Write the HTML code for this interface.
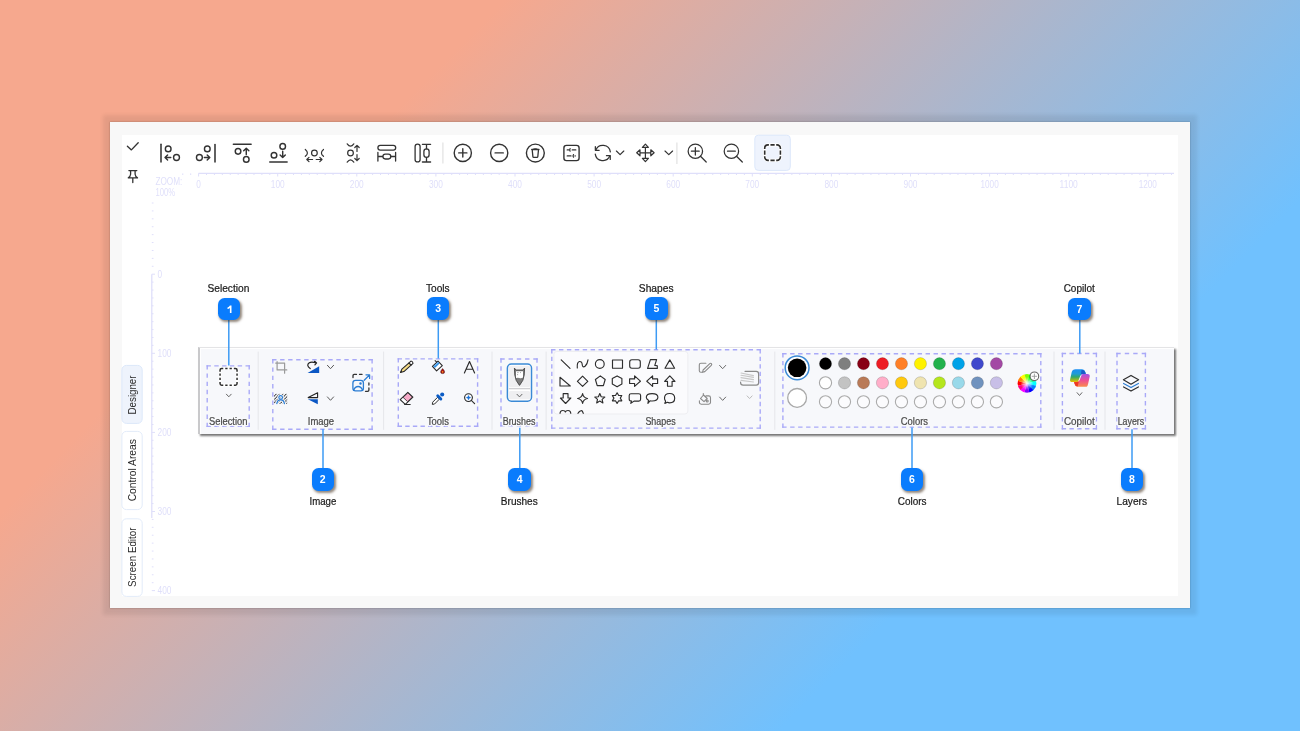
<!DOCTYPE html>
<html><head><meta charset="utf-8">
<style>
html,body{margin:0;padding:0;width:1300px;height:731px;overflow:hidden;}
body{position:relative;font-family:"Liberation Sans",sans-serif;
background:linear-gradient(134.5deg,#f6a88e 0%,#f6a88e 25%,#70c1fe 74.2%,#70c1fe 100%);}
.frame{position:absolute;left:110px;top:122px;width:1080px;height:486px;background:#f8f8f8;
box-shadow:0 0 1.5px rgba(0,0,0,.32),0 0 4px 7px rgba(0,0,0,.075);}
.inner{position:absolute;left:121.5px;top:134.6px;width:1056.8px;height:461.6px;background:#fff;}
.panel{position:absolute;left:198px;top:346.6px;width:976px;height:87.4px;background:#f7f8fb;
border-top:1.2px solid #e4e4e6;border-left:2px solid #c9c9cb;box-sizing:border-box;
box-shadow:inset 1px 1px 0 #fff,2px 2px 2px rgba(0,0,0,.55);}
svg{position:absolute;left:0;top:0;will-change:transform;}
svg text{font-family:"Liberation Sans",sans-serif;}
.badge{position:absolute;width:22.4px;height:22.5px;border-radius:6.5px;background:#0a7cfd;color:#fff;
font:bold 10.5px/22.5px "Liberation Sans",sans-serif;text-align:center;
box-shadow:1.5px 2px 2.5px rgba(60,40,20,.55);}
</style></head><body>
<div class="frame"></div>
<div class="inner"></div>
<div class="panel"></div>
<svg width="1300" height="731" viewBox="0 0 1300 731">
<line x1="198.5" y1="173.4" x2="1174" y2="173.4" stroke="#dfdffa" stroke-width="1.3"/>
<line x1="182.78" y1="173.4" x2="182.78" y2="175" stroke="#dfdffa" stroke-width="1"/>
<line x1="190.69" y1="173.4" x2="190.69" y2="175" stroke="#dfdffa" stroke-width="1"/>
<line x1="198.60" y1="173.4" x2="198.60" y2="176.5" stroke="#dfdffa" stroke-width="1"/>
<line x1="206.51" y1="173.4" x2="206.51" y2="175" stroke="#dfdffa" stroke-width="1"/>
<line x1="214.42" y1="173.4" x2="214.42" y2="175" stroke="#dfdffa" stroke-width="1"/>
<line x1="222.33" y1="173.4" x2="222.33" y2="175" stroke="#dfdffa" stroke-width="1"/>
<line x1="230.24" y1="173.4" x2="230.24" y2="175" stroke="#dfdffa" stroke-width="1"/>
<line x1="238.15" y1="173.4" x2="238.15" y2="175" stroke="#dfdffa" stroke-width="1"/>
<line x1="246.06" y1="173.4" x2="246.06" y2="175" stroke="#dfdffa" stroke-width="1"/>
<line x1="253.97" y1="173.4" x2="253.97" y2="175" stroke="#dfdffa" stroke-width="1"/>
<line x1="261.88" y1="173.4" x2="261.88" y2="175" stroke="#dfdffa" stroke-width="1"/>
<line x1="269.79" y1="173.4" x2="269.79" y2="175" stroke="#dfdffa" stroke-width="1"/>
<line x1="277.70" y1="173.4" x2="277.70" y2="176.5" stroke="#dfdffa" stroke-width="1"/>
<line x1="285.61" y1="173.4" x2="285.61" y2="175" stroke="#dfdffa" stroke-width="1"/>
<line x1="293.52" y1="173.4" x2="293.52" y2="175" stroke="#dfdffa" stroke-width="1"/>
<line x1="301.43" y1="173.4" x2="301.43" y2="175" stroke="#dfdffa" stroke-width="1"/>
<line x1="309.34" y1="173.4" x2="309.34" y2="175" stroke="#dfdffa" stroke-width="1"/>
<line x1="317.25" y1="173.4" x2="317.25" y2="175" stroke="#dfdffa" stroke-width="1"/>
<line x1="325.16" y1="173.4" x2="325.16" y2="175" stroke="#dfdffa" stroke-width="1"/>
<line x1="333.07" y1="173.4" x2="333.07" y2="175" stroke="#dfdffa" stroke-width="1"/>
<line x1="340.98" y1="173.4" x2="340.98" y2="175" stroke="#dfdffa" stroke-width="1"/>
<line x1="348.89" y1="173.4" x2="348.89" y2="175" stroke="#dfdffa" stroke-width="1"/>
<line x1="356.80" y1="173.4" x2="356.80" y2="176.5" stroke="#dfdffa" stroke-width="1"/>
<line x1="364.71" y1="173.4" x2="364.71" y2="175" stroke="#dfdffa" stroke-width="1"/>
<line x1="372.62" y1="173.4" x2="372.62" y2="175" stroke="#dfdffa" stroke-width="1"/>
<line x1="380.53" y1="173.4" x2="380.53" y2="175" stroke="#dfdffa" stroke-width="1"/>
<line x1="388.44" y1="173.4" x2="388.44" y2="175" stroke="#dfdffa" stroke-width="1"/>
<line x1="396.35" y1="173.4" x2="396.35" y2="175" stroke="#dfdffa" stroke-width="1"/>
<line x1="404.26" y1="173.4" x2="404.26" y2="175" stroke="#dfdffa" stroke-width="1"/>
<line x1="412.17" y1="173.4" x2="412.17" y2="175" stroke="#dfdffa" stroke-width="1"/>
<line x1="420.08" y1="173.4" x2="420.08" y2="175" stroke="#dfdffa" stroke-width="1"/>
<line x1="427.99" y1="173.4" x2="427.99" y2="175" stroke="#dfdffa" stroke-width="1"/>
<line x1="435.90" y1="173.4" x2="435.90" y2="176.5" stroke="#dfdffa" stroke-width="1"/>
<line x1="443.81" y1="173.4" x2="443.81" y2="175" stroke="#dfdffa" stroke-width="1"/>
<line x1="451.72" y1="173.4" x2="451.72" y2="175" stroke="#dfdffa" stroke-width="1"/>
<line x1="459.63" y1="173.4" x2="459.63" y2="175" stroke="#dfdffa" stroke-width="1"/>
<line x1="467.54" y1="173.4" x2="467.54" y2="175" stroke="#dfdffa" stroke-width="1"/>
<line x1="475.45" y1="173.4" x2="475.45" y2="175" stroke="#dfdffa" stroke-width="1"/>
<line x1="483.36" y1="173.4" x2="483.36" y2="175" stroke="#dfdffa" stroke-width="1"/>
<line x1="491.27" y1="173.4" x2="491.27" y2="175" stroke="#dfdffa" stroke-width="1"/>
<line x1="499.18" y1="173.4" x2="499.18" y2="175" stroke="#dfdffa" stroke-width="1"/>
<line x1="507.09" y1="173.4" x2="507.09" y2="175" stroke="#dfdffa" stroke-width="1"/>
<line x1="515.00" y1="173.4" x2="515.00" y2="176.5" stroke="#dfdffa" stroke-width="1"/>
<line x1="522.91" y1="173.4" x2="522.91" y2="175" stroke="#dfdffa" stroke-width="1"/>
<line x1="530.82" y1="173.4" x2="530.82" y2="175" stroke="#dfdffa" stroke-width="1"/>
<line x1="538.73" y1="173.4" x2="538.73" y2="175" stroke="#dfdffa" stroke-width="1"/>
<line x1="546.64" y1="173.4" x2="546.64" y2="175" stroke="#dfdffa" stroke-width="1"/>
<line x1="554.55" y1="173.4" x2="554.55" y2="175" stroke="#dfdffa" stroke-width="1"/>
<line x1="562.46" y1="173.4" x2="562.46" y2="175" stroke="#dfdffa" stroke-width="1"/>
<line x1="570.37" y1="173.4" x2="570.37" y2="175" stroke="#dfdffa" stroke-width="1"/>
<line x1="578.28" y1="173.4" x2="578.28" y2="175" stroke="#dfdffa" stroke-width="1"/>
<line x1="586.19" y1="173.4" x2="586.19" y2="175" stroke="#dfdffa" stroke-width="1"/>
<line x1="594.10" y1="173.4" x2="594.10" y2="176.5" stroke="#dfdffa" stroke-width="1"/>
<line x1="602.01" y1="173.4" x2="602.01" y2="175" stroke="#dfdffa" stroke-width="1"/>
<line x1="609.92" y1="173.4" x2="609.92" y2="175" stroke="#dfdffa" stroke-width="1"/>
<line x1="617.83" y1="173.4" x2="617.83" y2="175" stroke="#dfdffa" stroke-width="1"/>
<line x1="625.74" y1="173.4" x2="625.74" y2="175" stroke="#dfdffa" stroke-width="1"/>
<line x1="633.65" y1="173.4" x2="633.65" y2="175" stroke="#dfdffa" stroke-width="1"/>
<line x1="641.56" y1="173.4" x2="641.56" y2="175" stroke="#dfdffa" stroke-width="1"/>
<line x1="649.47" y1="173.4" x2="649.47" y2="175" stroke="#dfdffa" stroke-width="1"/>
<line x1="657.38" y1="173.4" x2="657.38" y2="175" stroke="#dfdffa" stroke-width="1"/>
<line x1="665.29" y1="173.4" x2="665.29" y2="175" stroke="#dfdffa" stroke-width="1"/>
<line x1="673.20" y1="173.4" x2="673.20" y2="176.5" stroke="#dfdffa" stroke-width="1"/>
<line x1="681.11" y1="173.4" x2="681.11" y2="175" stroke="#dfdffa" stroke-width="1"/>
<line x1="689.02" y1="173.4" x2="689.02" y2="175" stroke="#dfdffa" stroke-width="1"/>
<line x1="696.93" y1="173.4" x2="696.93" y2="175" stroke="#dfdffa" stroke-width="1"/>
<line x1="704.84" y1="173.4" x2="704.84" y2="175" stroke="#dfdffa" stroke-width="1"/>
<line x1="712.75" y1="173.4" x2="712.75" y2="175" stroke="#dfdffa" stroke-width="1"/>
<line x1="720.66" y1="173.4" x2="720.66" y2="175" stroke="#dfdffa" stroke-width="1"/>
<line x1="728.57" y1="173.4" x2="728.57" y2="175" stroke="#dfdffa" stroke-width="1"/>
<line x1="736.48" y1="173.4" x2="736.48" y2="175" stroke="#dfdffa" stroke-width="1"/>
<line x1="744.39" y1="173.4" x2="744.39" y2="175" stroke="#dfdffa" stroke-width="1"/>
<line x1="752.30" y1="173.4" x2="752.30" y2="176.5" stroke="#dfdffa" stroke-width="1"/>
<line x1="760.21" y1="173.4" x2="760.21" y2="175" stroke="#dfdffa" stroke-width="1"/>
<line x1="768.12" y1="173.4" x2="768.12" y2="175" stroke="#dfdffa" stroke-width="1"/>
<line x1="776.03" y1="173.4" x2="776.03" y2="175" stroke="#dfdffa" stroke-width="1"/>
<line x1="783.94" y1="173.4" x2="783.94" y2="175" stroke="#dfdffa" stroke-width="1"/>
<line x1="791.85" y1="173.4" x2="791.85" y2="175" stroke="#dfdffa" stroke-width="1"/>
<line x1="799.76" y1="173.4" x2="799.76" y2="175" stroke="#dfdffa" stroke-width="1"/>
<line x1="807.67" y1="173.4" x2="807.67" y2="175" stroke="#dfdffa" stroke-width="1"/>
<line x1="815.58" y1="173.4" x2="815.58" y2="175" stroke="#dfdffa" stroke-width="1"/>
<line x1="823.49" y1="173.4" x2="823.49" y2="175" stroke="#dfdffa" stroke-width="1"/>
<line x1="831.40" y1="173.4" x2="831.40" y2="176.5" stroke="#dfdffa" stroke-width="1"/>
<line x1="839.31" y1="173.4" x2="839.31" y2="175" stroke="#dfdffa" stroke-width="1"/>
<line x1="847.22" y1="173.4" x2="847.22" y2="175" stroke="#dfdffa" stroke-width="1"/>
<line x1="855.13" y1="173.4" x2="855.13" y2="175" stroke="#dfdffa" stroke-width="1"/>
<line x1="863.04" y1="173.4" x2="863.04" y2="175" stroke="#dfdffa" stroke-width="1"/>
<line x1="870.95" y1="173.4" x2="870.95" y2="175" stroke="#dfdffa" stroke-width="1"/>
<line x1="878.86" y1="173.4" x2="878.86" y2="175" stroke="#dfdffa" stroke-width="1"/>
<line x1="886.77" y1="173.4" x2="886.77" y2="175" stroke="#dfdffa" stroke-width="1"/>
<line x1="894.68" y1="173.4" x2="894.68" y2="175" stroke="#dfdffa" stroke-width="1"/>
<line x1="902.59" y1="173.4" x2="902.59" y2="175" stroke="#dfdffa" stroke-width="1"/>
<line x1="910.50" y1="173.4" x2="910.50" y2="176.5" stroke="#dfdffa" stroke-width="1"/>
<line x1="918.41" y1="173.4" x2="918.41" y2="175" stroke="#dfdffa" stroke-width="1"/>
<line x1="926.32" y1="173.4" x2="926.32" y2="175" stroke="#dfdffa" stroke-width="1"/>
<line x1="934.23" y1="173.4" x2="934.23" y2="175" stroke="#dfdffa" stroke-width="1"/>
<line x1="942.14" y1="173.4" x2="942.14" y2="175" stroke="#dfdffa" stroke-width="1"/>
<line x1="950.05" y1="173.4" x2="950.05" y2="175" stroke="#dfdffa" stroke-width="1"/>
<line x1="957.96" y1="173.4" x2="957.96" y2="175" stroke="#dfdffa" stroke-width="1"/>
<line x1="965.87" y1="173.4" x2="965.87" y2="175" stroke="#dfdffa" stroke-width="1"/>
<line x1="973.78" y1="173.4" x2="973.78" y2="175" stroke="#dfdffa" stroke-width="1"/>
<line x1="981.69" y1="173.4" x2="981.69" y2="175" stroke="#dfdffa" stroke-width="1"/>
<line x1="989.60" y1="173.4" x2="989.60" y2="176.5" stroke="#dfdffa" stroke-width="1"/>
<line x1="997.51" y1="173.4" x2="997.51" y2="175" stroke="#dfdffa" stroke-width="1"/>
<line x1="1005.42" y1="173.4" x2="1005.42" y2="175" stroke="#dfdffa" stroke-width="1"/>
<line x1="1013.33" y1="173.4" x2="1013.33" y2="175" stroke="#dfdffa" stroke-width="1"/>
<line x1="1021.24" y1="173.4" x2="1021.24" y2="175" stroke="#dfdffa" stroke-width="1"/>
<line x1="1029.15" y1="173.4" x2="1029.15" y2="175" stroke="#dfdffa" stroke-width="1"/>
<line x1="1037.06" y1="173.4" x2="1037.06" y2="175" stroke="#dfdffa" stroke-width="1"/>
<line x1="1044.97" y1="173.4" x2="1044.97" y2="175" stroke="#dfdffa" stroke-width="1"/>
<line x1="1052.88" y1="173.4" x2="1052.88" y2="175" stroke="#dfdffa" stroke-width="1"/>
<line x1="1060.79" y1="173.4" x2="1060.79" y2="175" stroke="#dfdffa" stroke-width="1"/>
<line x1="1068.70" y1="173.4" x2="1068.70" y2="176.5" stroke="#dfdffa" stroke-width="1"/>
<line x1="1076.61" y1="173.4" x2="1076.61" y2="175" stroke="#dfdffa" stroke-width="1"/>
<line x1="1084.52" y1="173.4" x2="1084.52" y2="175" stroke="#dfdffa" stroke-width="1"/>
<line x1="1092.43" y1="173.4" x2="1092.43" y2="175" stroke="#dfdffa" stroke-width="1"/>
<line x1="1100.34" y1="173.4" x2="1100.34" y2="175" stroke="#dfdffa" stroke-width="1"/>
<line x1="1108.25" y1="173.4" x2="1108.25" y2="175" stroke="#dfdffa" stroke-width="1"/>
<line x1="1116.16" y1="173.4" x2="1116.16" y2="175" stroke="#dfdffa" stroke-width="1"/>
<line x1="1124.07" y1="173.4" x2="1124.07" y2="175" stroke="#dfdffa" stroke-width="1"/>
<line x1="1131.98" y1="173.4" x2="1131.98" y2="175" stroke="#dfdffa" stroke-width="1"/>
<line x1="1139.89" y1="173.4" x2="1139.89" y2="175" stroke="#dfdffa" stroke-width="1"/>
<line x1="1147.80" y1="173.4" x2="1147.80" y2="176.5" stroke="#dfdffa" stroke-width="1"/>
<line x1="1155.71" y1="173.4" x2="1155.71" y2="175" stroke="#dfdffa" stroke-width="1"/>
<line x1="1163.62" y1="173.4" x2="1163.62" y2="175" stroke="#dfdffa" stroke-width="1"/>
<line x1="1171.53" y1="173.4" x2="1171.53" y2="175" stroke="#dfdffa" stroke-width="1"/>
<text x="198.6" y="187.8" font-size="10" fill="#dfdffa" text-anchor="middle" font-weight="normal" textLength="4.6" lengthAdjust="spacingAndGlyphs" >0</text>
<text x="277.7" y="187.8" font-size="10" fill="#dfdffa" text-anchor="middle" font-weight="normal" textLength="13.9" lengthAdjust="spacingAndGlyphs" >100</text>
<text x="356.8" y="187.8" font-size="10" fill="#dfdffa" text-anchor="middle" font-weight="normal" textLength="13.9" lengthAdjust="spacingAndGlyphs" >200</text>
<text x="435.9" y="187.8" font-size="10" fill="#dfdffa" text-anchor="middle" font-weight="normal" textLength="13.9" lengthAdjust="spacingAndGlyphs" >300</text>
<text x="515.0" y="187.8" font-size="10" fill="#dfdffa" text-anchor="middle" font-weight="normal" textLength="13.9" lengthAdjust="spacingAndGlyphs" >400</text>
<text x="594.1" y="187.8" font-size="10" fill="#dfdffa" text-anchor="middle" font-weight="normal" textLength="13.9" lengthAdjust="spacingAndGlyphs" >500</text>
<text x="673.2" y="187.8" font-size="10" fill="#dfdffa" text-anchor="middle" font-weight="normal" textLength="13.9" lengthAdjust="spacingAndGlyphs" >600</text>
<text x="752.3" y="187.8" font-size="10" fill="#dfdffa" text-anchor="middle" font-weight="normal" textLength="13.9" lengthAdjust="spacingAndGlyphs" >700</text>
<text x="831.4" y="187.8" font-size="10" fill="#dfdffa" text-anchor="middle" font-weight="normal" textLength="13.9" lengthAdjust="spacingAndGlyphs" >800</text>
<text x="910.5" y="187.8" font-size="10" fill="#dfdffa" text-anchor="middle" font-weight="normal" textLength="13.9" lengthAdjust="spacingAndGlyphs" >900</text>
<text x="989.6" y="187.8" font-size="10" fill="#dfdffa" text-anchor="middle" font-weight="normal" textLength="18.2" lengthAdjust="spacingAndGlyphs" >1000</text>
<text x="1068.7" y="187.8" font-size="10" fill="#dfdffa" text-anchor="middle" font-weight="normal" textLength="18.2" lengthAdjust="spacingAndGlyphs" >1100</text>
<text x="1147.8" y="187.8" font-size="10" fill="#dfdffa" text-anchor="middle" font-weight="normal" textLength="18.2" lengthAdjust="spacingAndGlyphs" >1200</text>
<line x1="151.8" y1="274.2" x2="151.8" y2="518" stroke="#dfdffa" stroke-width="1.3"/>
<line x1="151.8" y1="203.01" x2="153.5" y2="203.01" stroke="#dfdffa" stroke-width="1"/>
<line x1="151.8" y1="210.92" x2="153.5" y2="210.92" stroke="#dfdffa" stroke-width="1"/>
<line x1="151.8" y1="218.83" x2="153.5" y2="218.83" stroke="#dfdffa" stroke-width="1"/>
<line x1="151.8" y1="226.74" x2="153.5" y2="226.74" stroke="#dfdffa" stroke-width="1"/>
<line x1="151.8" y1="234.65" x2="153.5" y2="234.65" stroke="#dfdffa" stroke-width="1"/>
<line x1="151.8" y1="242.56" x2="153.5" y2="242.56" stroke="#dfdffa" stroke-width="1"/>
<line x1="151.8" y1="250.47" x2="153.5" y2="250.47" stroke="#dfdffa" stroke-width="1"/>
<line x1="151.8" y1="258.38" x2="153.5" y2="258.38" stroke="#dfdffa" stroke-width="1"/>
<line x1="151.8" y1="266.29" x2="153.5" y2="266.29" stroke="#dfdffa" stroke-width="1"/>
<line x1="151.8" y1="274.20" x2="155" y2="274.20" stroke="#dfdffa" stroke-width="1"/>
<line x1="151.8" y1="282.11" x2="153.5" y2="282.11" stroke="#dfdffa" stroke-width="1"/>
<line x1="151.8" y1="290.02" x2="153.5" y2="290.02" stroke="#dfdffa" stroke-width="1"/>
<line x1="151.8" y1="297.93" x2="153.5" y2="297.93" stroke="#dfdffa" stroke-width="1"/>
<line x1="151.8" y1="305.84" x2="153.5" y2="305.84" stroke="#dfdffa" stroke-width="1"/>
<line x1="151.8" y1="313.75" x2="153.5" y2="313.75" stroke="#dfdffa" stroke-width="1"/>
<line x1="151.8" y1="321.66" x2="153.5" y2="321.66" stroke="#dfdffa" stroke-width="1"/>
<line x1="151.8" y1="329.57" x2="153.5" y2="329.57" stroke="#dfdffa" stroke-width="1"/>
<line x1="151.8" y1="337.48" x2="153.5" y2="337.48" stroke="#dfdffa" stroke-width="1"/>
<line x1="151.8" y1="345.39" x2="153.5" y2="345.39" stroke="#dfdffa" stroke-width="1"/>
<line x1="151.8" y1="353.30" x2="155" y2="353.30" stroke="#dfdffa" stroke-width="1"/>
<line x1="151.8" y1="361.21" x2="153.5" y2="361.21" stroke="#dfdffa" stroke-width="1"/>
<line x1="151.8" y1="369.12" x2="153.5" y2="369.12" stroke="#dfdffa" stroke-width="1"/>
<line x1="151.8" y1="377.03" x2="153.5" y2="377.03" stroke="#dfdffa" stroke-width="1"/>
<line x1="151.8" y1="384.94" x2="153.5" y2="384.94" stroke="#dfdffa" stroke-width="1"/>
<line x1="151.8" y1="392.85" x2="153.5" y2="392.85" stroke="#dfdffa" stroke-width="1"/>
<line x1="151.8" y1="400.76" x2="153.5" y2="400.76" stroke="#dfdffa" stroke-width="1"/>
<line x1="151.8" y1="408.67" x2="153.5" y2="408.67" stroke="#dfdffa" stroke-width="1"/>
<line x1="151.8" y1="416.58" x2="153.5" y2="416.58" stroke="#dfdffa" stroke-width="1"/>
<line x1="151.8" y1="424.49" x2="153.5" y2="424.49" stroke="#dfdffa" stroke-width="1"/>
<line x1="151.8" y1="432.40" x2="155" y2="432.40" stroke="#dfdffa" stroke-width="1"/>
<line x1="151.8" y1="440.31" x2="153.5" y2="440.31" stroke="#dfdffa" stroke-width="1"/>
<line x1="151.8" y1="448.22" x2="153.5" y2="448.22" stroke="#dfdffa" stroke-width="1"/>
<line x1="151.8" y1="456.13" x2="153.5" y2="456.13" stroke="#dfdffa" stroke-width="1"/>
<line x1="151.8" y1="464.04" x2="153.5" y2="464.04" stroke="#dfdffa" stroke-width="1"/>
<line x1="151.8" y1="471.95" x2="153.5" y2="471.95" stroke="#dfdffa" stroke-width="1"/>
<line x1="151.8" y1="479.86" x2="153.5" y2="479.86" stroke="#dfdffa" stroke-width="1"/>
<line x1="151.8" y1="487.77" x2="153.5" y2="487.77" stroke="#dfdffa" stroke-width="1"/>
<line x1="151.8" y1="495.68" x2="153.5" y2="495.68" stroke="#dfdffa" stroke-width="1"/>
<line x1="151.8" y1="503.59" x2="153.5" y2="503.59" stroke="#dfdffa" stroke-width="1"/>
<line x1="151.8" y1="511.50" x2="155" y2="511.50" stroke="#dfdffa" stroke-width="1"/>
<line x1="151.8" y1="519.41" x2="153.5" y2="519.41" stroke="#dfdffa" stroke-width="1"/>
<line x1="151.8" y1="527.32" x2="153.5" y2="527.32" stroke="#dfdffa" stroke-width="1"/>
<line x1="151.8" y1="535.23" x2="153.5" y2="535.23" stroke="#dfdffa" stroke-width="1"/>
<line x1="151.8" y1="543.14" x2="153.5" y2="543.14" stroke="#dfdffa" stroke-width="1"/>
<line x1="151.8" y1="551.05" x2="153.5" y2="551.05" stroke="#dfdffa" stroke-width="1"/>
<line x1="151.8" y1="558.96" x2="153.5" y2="558.96" stroke="#dfdffa" stroke-width="1"/>
<line x1="151.8" y1="566.87" x2="153.5" y2="566.87" stroke="#dfdffa" stroke-width="1"/>
<line x1="151.8" y1="574.78" x2="153.5" y2="574.78" stroke="#dfdffa" stroke-width="1"/>
<line x1="151.8" y1="582.69" x2="153.5" y2="582.69" stroke="#dfdffa" stroke-width="1"/>
<line x1="151.8" y1="590.60" x2="155" y2="590.60" stroke="#dfdffa" stroke-width="1"/>
<text x="157.5" y="277.8" font-size="10" fill="#dfdffa" text-anchor="start" font-weight="normal" textLength="4.6" lengthAdjust="spacingAndGlyphs" >0</text>
<text x="157.5" y="356.9" font-size="10" fill="#dfdffa" text-anchor="start" font-weight="normal" textLength="13.9" lengthAdjust="spacingAndGlyphs" >100</text>
<text x="157.5" y="436.0" font-size="10" fill="#dfdffa" text-anchor="start" font-weight="normal" textLength="13.9" lengthAdjust="spacingAndGlyphs" >200</text>
<text x="157.5" y="515.1" font-size="10" fill="#dfdffa" text-anchor="start" font-weight="normal" textLength="13.9" lengthAdjust="spacingAndGlyphs" >300</text>
<text x="157.5" y="594.2" font-size="10" fill="#dfdffa" text-anchor="start" font-weight="normal" textLength="13.9" lengthAdjust="spacingAndGlyphs" >400</text>
<text x="155.4" y="185.3" font-size="10" fill="#dfdffa" text-anchor="start" font-weight="normal" textLength="27" lengthAdjust="spacingAndGlyphs" >ZOOM:</text>
<text x="155.4" y="195.8" font-size="10" fill="#dfdffa" text-anchor="start" font-weight="normal" textLength="19.6" lengthAdjust="spacingAndGlyphs" >100%</text>
<rect x="121.9" y="365.4" width="20.3" height="58.0" rx="4.5" fill="#eef3fc" stroke="#dce8fa" stroke-width="1"/>
<text transform="translate(135.9 414.4) rotate(-90)" x="0" y="0" font-size="10.2" fill="#2a2a2a" textLength="38.9" lengthAdjust="spacingAndGlyphs">Designer</text>
<rect x="121.9" y="431.4" width="20.3" height="78.2" rx="4.5" fill="#ffffff" stroke="#e2ebf9" stroke-width="1"/>
<text transform="translate(135.9 501.3) rotate(-90)" x="0" y="0" font-size="10.2" fill="#2a2a2a" textLength="62.2" lengthAdjust="spacingAndGlyphs">Control Areas</text>
<rect x="121.9" y="518.8" width="20.3" height="77.6" rx="4.5" fill="#ffffff" stroke="#e2ebf9" stroke-width="1"/>
<text transform="translate(135.9 586.9) rotate(-90)" x="0" y="0" font-size="10.2" fill="#2a2a2a" textLength="59.4" lengthAdjust="spacingAndGlyphs">Screen Editor</text>
<g fill="none" stroke="#333" stroke-width="1.35" stroke-linecap="round" stroke-linejoin="round"><path d="M127.4 146.2 L131.4 149.9 L138.2 142.7"/></g>
<g fill="none" stroke="#333" stroke-width="1.3" stroke-linecap="round" stroke-linejoin="round"><path d="M128.9 170.6 H136.8 M130.6 170.6 V174.2 Q130.4 176.4 128.3 177.9 H137.5 Q135.3 176.4 135.1 174.2 V170.6 M132.8 178 V182.6"/></g>
<g fill="none" stroke="#333" stroke-width="1.55" stroke-linecap="round" stroke-linejoin="round"><path d="M161 144.3 V161.9"/></g>
<g fill="none" stroke="#333" stroke-width="1.4" stroke-linecap="round" stroke-linejoin="round"><circle cx="168.2" cy="148.9" r="2.85"/><circle cx="176.5" cy="157.5" r="2.95"/><path d="M170.8 157.5 H165.2 M167.6 154.9 L165 157.5 L167.6 160.1"/></g>
<g fill="none" stroke="#333" stroke-width="1.55" stroke-linecap="round" stroke-linejoin="round"><path d="M215 144.4 V161.9"/></g>
<g fill="none" stroke="#333" stroke-width="1.4" stroke-linecap="round" stroke-linejoin="round"><circle cx="199.4" cy="157.5" r="2.95"/><circle cx="207.3" cy="148.9" r="2.85"/><path d="M204.3 157.5 H209.6 M207.2 154.9 L209.8 157.5 L207.2 160.1"/></g>
<g fill="none" stroke="#333" stroke-width="1.55" stroke-linecap="round" stroke-linejoin="round"><path d="M233.4 144.3 H251.1"/></g>
<g fill="none" stroke="#333" stroke-width="1.45" stroke-linecap="round" stroke-linejoin="round"><circle cx="238.05" cy="151.35" r="2.8"/><circle cx="246.27" cy="159.4" r="2.8"/><path d="M246.27 154.5 V148.4 M243.7 150.8 L246.27 148.2 L248.85 150.8"/></g>
<g fill="none" stroke="#333" stroke-width="1.55" stroke-linecap="round" stroke-linejoin="round"><path d="M269.8 161.9 H287.1"/></g>
<g fill="none" stroke="#333" stroke-width="1.45" stroke-linecap="round" stroke-linejoin="round"><circle cx="282.7" cy="146.4" r="2.8"/><circle cx="274" cy="155.2" r="2.8"/><path d="M282.7 151.3 V157.4 M280.12 155 L282.7 157.6 L285.28 155"/></g>
<g fill="none" stroke="#333" stroke-width="1.2" stroke-linecap="round" stroke-linejoin="round"><circle cx="314.4" cy="153" r="2.85"/><path d="M305.3 149.5 Q309.5 152.9 305.3 156.3 M323.5 149.5 Q319.3 152.9 323.5 156.3 M312.6 159.5 H306.8 M309 157.3 L306.8 159.5 L309 161.7 M316.2 159.5 H322 M319.8 157.3 L322 159.5 L319.8 161.7"/></g>
<g fill="none" stroke="#333" stroke-width="1.2" stroke-linecap="round" stroke-linejoin="round"><circle cx="350.5" cy="153" r="2.85"/><path d="M347.2 143.8 Q350.5 148.4 353.8 143.8 M347.2 162.2 Q350.5 157.6 353.8 162.2 M357 151.5 V145.3 M354.8 147.5 L357 145.3 L359.2 147.5 M357 154.5 V160.7 M354.8 158.5 L357 160.7 L359.2 158.5"/></g>
<g fill="none" stroke="#333" stroke-width="1.3" stroke-linecap="round" stroke-linejoin="round"><rect x="377.9" y="145.4" width="17.8" height="4.8" rx="2.4"/><path d="M377.9 152.4 V161 M395.6 152.4 V161 M378 156.5 H382.6 M391 156.5 H395.5"/><rect x="382.9" y="154.1" width="7.9" height="4.9" rx="2.4"/></g>
<g fill="none" stroke="#333" stroke-width="1.3" stroke-linecap="round" stroke-linejoin="round"><rect x="415.1" y="144.1" width="5" height="17.8" rx="2.5"/><path d="M422.4 144.3 H430.6 M422.4 162 H430.6 M426.5 144.3 V148.8 M426.5 157.4 V162"/><rect x="423.9" y="148.9" width="5.2" height="8.4" rx="2.6"/></g>
<line x1="442.9" y1="142.5" x2="442.9" y2="163.5" stroke="#e1e1e1" stroke-width="1.2"/>
<g fill="none" stroke="#333" stroke-width="1.4" stroke-linecap="round" stroke-linejoin="round"><circle cx="462.8" cy="152.9" r="8.6"/><path d="M462.8 148.8 V157 M458.7 152.9 H466.9"/></g>
<g fill="none" stroke="#333" stroke-width="1.4" stroke-linecap="round" stroke-linejoin="round"><circle cx="499.2" cy="152.9" r="8.6"/><path d="M495.1 152.9 H503.3"/></g>
<g fill="none" stroke="#333" stroke-width="1.4" stroke-linecap="round" stroke-linejoin="round"><circle cx="535.35" cy="153.05" r="8.95"/></g>
<g fill="none" stroke="#333" stroke-width="1.3" stroke-linecap="round" stroke-linejoin="round"><path d="M531.7 149.5 H539 M532.2 149.8 L532.9 156.6 Q533 157.4 533.7 157.4 H537 Q537.7 157.4 537.8 156.6 L538.5 149.8"/></g>
<path d="M533.4 148.6 Q535.35 147.9 537.3 148.6 L537.6 149.6 H533.1 Z" fill="#333"/>
<g fill="none" stroke="#333" stroke-width="1.4" stroke-linecap="round" stroke-linejoin="round"><rect x="563.9" y="145.4" width="15.2" height="15.2" rx="2.6"/></g>
<g fill="none" stroke="#333" stroke-width="1.25" stroke-linecap="round" stroke-linejoin="round"><path d="M567.2 149.9 H568.6 M572.2 149.9 H575.8 M567.2 155.9 H571 M575 155.9 H575.3"/></g>
<g fill="none" stroke="#333" stroke-width="1.25" stroke-linecap="round" stroke-linejoin="round"><path d="M570.1 148.6 Q569.1 149.9 570.1 151.2 M573.5 154.6 Q572.5 155.9 573.5 157.2"/></g>
<g fill="none" stroke="#333" stroke-width="1.25" stroke-linecap="round" stroke-linejoin="round"><path d="M610.33 151.94 A7.6 7.6 0 0 0 595.75 150.15 M595.27 154.06 A7.6 7.6 0 0 0 609.85 155.85"/><path d="M595.35 146.55 V150.35 H599.15 M610.25 159.45 V155.65 H606.45"/></g>
<g fill="none" stroke="#333" stroke-width="1.15" stroke-linecap="round" stroke-linejoin="round"><path d="M616.4 151 L620.1 154.7 L623.8 151"/></g>
<g fill="none" stroke="#333" stroke-width="1.2" stroke-linecap="round" stroke-linejoin="round"><path d="M640 152.8 H650.8 M645.4 147.6 V158.1 M642.4 147.4 L645.4 144.1 L648.4 147.4 Z M642.4 158.3 L645.4 161.6 L648.4 158.3 Z M640 149.8 L636.7 152.8 L640 155.8 Z M650.8 149.8 L654.1 152.8 L650.8 155.8 Z"/></g>
<g fill="none" stroke="#333" stroke-width="1.15" stroke-linecap="round" stroke-linejoin="round"><path d="M665 151 L668.8 154.7 L672.6 151"/></g>
<line x1="676.9" y1="142.4" x2="676.9" y2="163.9" stroke="#e1e1e1" stroke-width="1.2"/>
<g fill="none" stroke="#333" stroke-width="1.25" stroke-linecap="round" stroke-linejoin="round"><circle cx="695.35" cy="151.2" r="7.2"/><path d="M691.4 151.2 H699.2 M695.35 147.5 V155 M700.5 156.3 L706.2 162"/></g>
<g fill="none" stroke="#333" stroke-width="1.25" stroke-linecap="round" stroke-linejoin="round"><circle cx="731.4" cy="151.2" r="7.2"/><path d="M727.5 151.2 H735.3 M736.5 156.3 L742.3 162"/></g>
<rect x="754.8" y="135.2" width="35.5" height="35.2" rx="3.5" fill="#eef3fd" stroke="#dde8fb" stroke-width="1"/>
<path d="M764.7 149.10000000000002 V148.20000000000002 A3.3 3.3 0 0 1 768.0 144.9 H768.9 M776.2 144.9 H777.1 A3.3 3.3 0 0 1 780.4 148.20000000000002 V149.10000000000002 M780.4 156.2 V157.1 A3.3 3.3 0 0 1 777.1 160.4 H776.2 M768.9 160.4 H768.0 A3.3 3.3 0 0 1 764.7 157.1 V156.2 M770.45 144.9 H774.65 M770.45 160.4 H774.65 M764.7 150.55 V154.75 M780.4 150.55 V154.75" fill="none" stroke="#ffffff" stroke-width="3.2" stroke-linecap="round"/><path d="M764.7 149.10000000000002 V148.20000000000002 A3.3 3.3 0 0 1 768.0 144.9 H768.9 M776.2 144.9 H777.1 A3.3 3.3 0 0 1 780.4 148.20000000000002 V149.10000000000002 M780.4 156.2 V157.1 A3.3 3.3 0 0 1 777.1 160.4 H776.2 M768.9 160.4 H768.0 A3.3 3.3 0 0 1 764.7 157.1 V156.2 M770.45 144.9 H774.65 M770.45 160.4 H774.65 M764.7 150.55 V154.75 M780.4 150.55 V154.75" fill="none" stroke="#2e2e2e" stroke-width="1.6" stroke-linecap="butt"/>
<line x1="258.2" y1="351.6" x2="258.2" y2="429.8" stroke="#e5e6ea" stroke-width="1"/>
<line x1="383.6" y1="351.6" x2="383.6" y2="429.8" stroke="#e5e6ea" stroke-width="1"/>
<line x1="492" y1="351.6" x2="492" y2="429.8" stroke="#e5e6ea" stroke-width="1"/>
<line x1="546.1" y1="351.6" x2="546.1" y2="429.8" stroke="#e5e6ea" stroke-width="1"/>
<line x1="774.8" y1="351.6" x2="774.8" y2="429.8" stroke="#e5e6ea" stroke-width="1"/>
<line x1="1054" y1="351.6" x2="1054" y2="429.8" stroke="#e5e6ea" stroke-width="1"/>
<line x1="1105" y1="351.6" x2="1105" y2="429.8" stroke="#e5e6ea" stroke-width="1"/>
<line x1="206.5" y1="365.9" x2="249.89999999999998" y2="365.9" stroke="#a9a9f8" stroke-width="1.4" stroke-dasharray="4.4 3.400"/><line x1="206.5" y1="426.4" x2="249.89999999999998" y2="426.4" stroke="#a9a9f8" stroke-width="1.4" stroke-dasharray="4.4 3.400"/><line x1="207.2" y1="365.2" x2="207.2" y2="427.09999999999997" stroke="#a9a9f8" stroke-width="1.4" stroke-dasharray="4.4 3.814"/><line x1="249.2" y1="365.2" x2="249.2" y2="427.09999999999997" stroke="#a9a9f8" stroke-width="1.4" stroke-dasharray="4.4 3.814"/>
<line x1="272.1" y1="359.8" x2="372.8" y2="359.8" stroke="#a9a9f8" stroke-width="1.4" stroke-dasharray="4.4 3.625"/><line x1="272.1" y1="429.2" x2="372.8" y2="429.2" stroke="#a9a9f8" stroke-width="1.4" stroke-dasharray="4.4 3.625"/><line x1="272.8" y1="359.1" x2="272.8" y2="429.9" stroke="#a9a9f8" stroke-width="1.4" stroke-dasharray="4.4 3.900"/><line x1="372.1" y1="359.1" x2="372.1" y2="429.9" stroke="#a9a9f8" stroke-width="1.4" stroke-dasharray="4.4 3.900"/>
<line x1="397.6" y1="358.9" x2="478.3" y2="358.9" stroke="#a9a9f8" stroke-width="1.4" stroke-dasharray="4.4 3.230"/><line x1="397.6" y1="426.2" x2="478.3" y2="426.2" stroke="#a9a9f8" stroke-width="1.4" stroke-dasharray="4.4 3.230"/><line x1="398.3" y1="358.2" x2="398.3" y2="426.9" stroke="#a9a9f8" stroke-width="1.4" stroke-dasharray="4.4 3.637"/><line x1="477.6" y1="358.2" x2="477.6" y2="426.9" stroke="#a9a9f8" stroke-width="1.4" stroke-dasharray="4.4 3.637"/>
<line x1="500.3" y1="359.0" x2="537.7" y2="359.0" stroke="#a9a9f8" stroke-width="1.4" stroke-dasharray="4.4 3.850"/><line x1="500.3" y1="425.8" x2="537.7" y2="425.8" stroke="#a9a9f8" stroke-width="1.4" stroke-dasharray="4.4 3.850"/><line x1="501.0" y1="358.3" x2="501.0" y2="426.5" stroke="#a9a9f8" stroke-width="1.4" stroke-dasharray="4.4 3.575"/><line x1="537.0" y1="358.3" x2="537.0" y2="426.5" stroke="#a9a9f8" stroke-width="1.4" stroke-dasharray="4.4 3.575"/>
<line x1="551.0999999999999" y1="349.8" x2="760.9000000000001" y2="349.8" stroke="#a9a9f8" stroke-width="1.4" stroke-dasharray="4.4 3.500"/><line x1="551.0999999999999" y1="428.1" x2="760.9000000000001" y2="428.1" stroke="#a9a9f8" stroke-width="1.4" stroke-dasharray="4.4 3.500"/><line x1="551.8" y1="349.1" x2="551.8" y2="428.8" stroke="#a9a9f8" stroke-width="1.4" stroke-dasharray="4.4 3.130"/><line x1="760.2" y1="349.1" x2="760.2" y2="428.8" stroke="#a9a9f8" stroke-width="1.4" stroke-dasharray="4.4 3.130"/>
<line x1="782.1999999999999" y1="353.8" x2="1041.5" y2="353.8" stroke="#a9a9f8" stroke-width="1.4" stroke-dasharray="4.4 3.566"/><line x1="782.1999999999999" y1="427.1" x2="1041.5" y2="427.1" stroke="#a9a9f8" stroke-width="1.4" stroke-dasharray="4.4 3.566"/><line x1="782.9" y1="353.1" x2="782.9" y2="427.8" stroke="#a9a9f8" stroke-width="1.4" stroke-dasharray="4.4 3.411"/><line x1="1040.8" y1="353.1" x2="1040.8" y2="427.8" stroke="#a9a9f8" stroke-width="1.4" stroke-dasharray="4.4 3.411"/>
<line x1="1061.7" y1="353.5" x2="1097.1000000000001" y2="353.5" stroke="#a9a9f8" stroke-width="1.4" stroke-dasharray="4.4 3.350"/><line x1="1061.7" y1="428.8" x2="1097.1000000000001" y2="428.8" stroke="#a9a9f8" stroke-width="1.4" stroke-dasharray="4.4 3.350"/><line x1="1062.4" y1="352.8" x2="1062.4" y2="429.5" stroke="#a9a9f8" stroke-width="1.4" stroke-dasharray="4.4 3.633"/><line x1="1096.4" y1="352.8" x2="1096.4" y2="429.5" stroke="#a9a9f8" stroke-width="1.4" stroke-dasharray="4.4 3.633"/>
<line x1="1116.3" y1="353.5" x2="1146.1000000000001" y2="353.5" stroke="#a9a9f8" stroke-width="1.4" stroke-dasharray="4.4 4.067"/><line x1="1116.3" y1="428.8" x2="1146.1000000000001" y2="428.8" stroke="#a9a9f8" stroke-width="1.4" stroke-dasharray="4.4 4.067"/><line x1="1117.0" y1="352.8" x2="1117.0" y2="429.5" stroke="#a9a9f8" stroke-width="1.4" stroke-dasharray="4.4 3.633"/><line x1="1145.4" y1="352.8" x2="1145.4" y2="429.5" stroke="#a9a9f8" stroke-width="1.4" stroke-dasharray="4.4 3.633"/>
<path d="M220.05 371.65000000000003 V370.05 A1.6 1.6 0 0 1 221.65 368.45 H223.25 M233.85000000000002 368.45 H235.45000000000002 A1.6 1.6 0 0 1 237.05 370.05 V371.65000000000003 M237.05 381.94999999999993 V383.54999999999995 A1.6 1.6 0 0 1 235.45000000000002 385.15 H233.85000000000002 M223.25 385.15 H221.65 A1.6 1.6 0 0 1 220.05 383.54999999999995 V381.94999999999993 M225.25 368.45 H227.55 M225.25 385.15 H227.55 M229.55 368.45 H231.85 M229.55 385.15 H231.85 M220.05 373.55 V375.85 M237.05 373.55 V375.85 M220.05 377.75 V380.05 M237.05 377.75 V380.05" fill="none" stroke="#ffffff" stroke-width="3.1" stroke-linecap="round"/><path d="M220.05 371.65000000000003 V370.05 A1.6 1.6 0 0 1 221.65 368.45 H223.25 M233.85000000000002 368.45 H235.45000000000002 A1.6 1.6 0 0 1 237.05 370.05 V371.65000000000003 M237.05 381.94999999999993 V383.54999999999995 A1.6 1.6 0 0 1 235.45000000000002 385.15 H233.85000000000002 M223.25 385.15 H221.65 A1.6 1.6 0 0 1 220.05 383.54999999999995 V381.94999999999993 M225.25 368.45 H227.55 M225.25 385.15 H227.55 M229.55 368.45 H231.85 M229.55 385.15 H231.85 M220.05 373.55 V375.85 M237.05 373.55 V375.85 M220.05 377.75 V380.05 M237.05 377.75 V380.05" fill="none" stroke="#2e2e2e" stroke-width="1.5" stroke-linecap="butt"/>
<g fill="none" stroke="#666" stroke-width="1" stroke-linecap="round" stroke-linejoin="round"><path d="M226.4 394.2 L228.8 396.8 L231.2 394.2"/></g>
<text x="228.2" y="424.8" font-size="10" fill="#f7f8fb" text-anchor="middle" textLength="38.5" lengthAdjust="spacingAndGlyphs" stroke="#f9fafc" stroke-width="2.4" stroke-linejoin="round">Selection</text><text x="228.2" y="424.8" font-size="10" fill="#4a4a4a" text-anchor="middle" textLength="38.5" lengthAdjust="spacingAndGlyphs" stroke="#4a4a4a" stroke-width="0.22">Selection</text>
<g fill="none" stroke="#9a9a9a" stroke-width="1.2" stroke-linecap="round" stroke-linejoin="round"><path d="M277.1 361.7 V369.9 H286.8 M275.7 363.1 H284.6 V373.2"/></g>
<path d="M307.6 372.9 L319.2 366.2 V372.9 Z" fill="#0b57c4"/>
<g fill="none" stroke="#222" stroke-width="1.2" stroke-linecap="round" stroke-linejoin="round"><path d="M310.2 368.6 Q305.8 365.3 309.3 362.7 Q311.5 361.6 316.4 362.9 M314.6 361.3 L316.6 362.9 L314.9 364.8"/></g>
<g fill="none" stroke="#5a5a5a" stroke-width="1.0" stroke-linecap="round" stroke-linejoin="round"><path d="M327.4 365.3 L330.5 368.7 L333.6 365.3"/></g>
<clipPath id="rbclip"><rect x="274" y="393.8" width="13.2" height="10"/></clipPath>
<g clip-path="url(#rbclip)"><path d="M259.80 404 L270.30 393.5 M263.10 404 L273.60 393.5 M266.40 404 L276.90 393.5 M269.70 404 L280.20 393.5 M273.00 404 L283.50 393.5 M276.30 404 L286.80 393.5 M279.60 404 L290.10 393.5 M282.90 404 L293.40 393.5 M286.20 404 L296.70 393.5" fill="none" stroke="#3a3a3a" stroke-width="1.2" stroke-dasharray="1.3 0.5"/></g>
<g fill="none" stroke="#ffffff" stroke-width="2.6" stroke-linecap="round" stroke-linejoin="round"><circle cx="280.65" cy="397.4" r="1.8"/><path d="M276.8 403.7 Q277.3 399.8 280.65 399.8 Q284 399.8 284.4 403.7"/></g>
<g fill="none" stroke="#2b7cd3" stroke-width="1.25" stroke-linecap="round" stroke-linejoin="round"><circle cx="280.65" cy="397.4" r="1.8"/><path d="M276.8 403.7 Q277.3 399.8 280.65 399.8 Q284 399.8 284.4 403.7"/></g>
<g fill="none" stroke="#222" stroke-width="1.1" stroke-linecap="round" stroke-linejoin="round"><path d="M308.2 397.6 L317.6 392.7 V397.6 Z"/></g>
<path d="M307.8 399.3 H317.8 V404.2 Z" fill="#0b57c4"/>
<g fill="none" stroke="#5a5a5a" stroke-width="1.0" stroke-linecap="round" stroke-linejoin="round"><path d="M327.4 396.9 L330.5 400.3 L333.6 396.9"/></g>
<g fill="none" stroke="#333" stroke-width="1.3" stroke-linecap="round" stroke-linejoin="round"><path d="M353 377.5 V375.5 Q353 374.4 354.1 374.4 H356.5 M359.5 374.4 H362 M368.9 383 V385 M368.9 388 V390 Q368.9 391.3 367.6 391.3 H365.5"/></g>
<g fill="none" stroke="#2b7cd3" stroke-width="1.3" stroke-linecap="round" stroke-linejoin="round"><rect x="352.9" y="380.4" width="10.5" height="10.5" rx="2.6"/><circle cx="360.5" cy="383.5" r="0.6"/><path d="M353.6 390.2 Q355.2 386.5 358.1 386.5 Q361 386.5 362.6 390.2 M364.2 380.3 L369.6 374.9 M366 374.8 H369.6 V378.4"/></g>
<text x="320.9" y="424.8" font-size="10" fill="#f7f8fb" text-anchor="middle" textLength="26.3" lengthAdjust="spacingAndGlyphs" stroke="#f9fafc" stroke-width="2.4" stroke-linejoin="round">Image</text><text x="320.9" y="424.8" font-size="10" fill="#4a4a4a" text-anchor="middle" textLength="26.3" lengthAdjust="spacingAndGlyphs" stroke="#4a4a4a" stroke-width="0.22">Image</text>
<path d="M400.50 372.50 L403.92 371.52 L411.10 365.09 L409.03 362.78 L401.85 369.21 Z" fill="#f6dc86" stroke="#262626" stroke-width="1.05" stroke-linejoin="round"/>
<path d="M411.10 365.09 L413.03 363.35 Q412.89 361.40 410.97 361.05 L409.03 362.78 Z" fill="#fff" stroke="#262626" stroke-width="1.05" stroke-linejoin="round"/>
<path d="M400.50 372.50 L402.23 372.03 L401.16 370.84 Z" fill="#262626"/>
<path d="M432.4 366.3 L438 361.2 L442.3 365.7 L436.6 370.9 Z" fill="#fff" stroke="#2a2a2a" stroke-width="1.1" stroke-linejoin="round"/>
<path d="M433.3 366.2 L438 361.9 L439.6 363.6 L434.9 367.9 Z" fill="#2f8fe6"/>
<path d="M434.3 366.1 L438.1 362.7" stroke="#9fd0f6" stroke-width="0.6"/>
<path d="M434.8 360.3 L436.8 362.2" stroke="#2a2a2a" stroke-width="1.1" fill="none"/>
<path d="M442.6 368.6 Q444.6 370.9 444.6 371.9 Q444.6 373.6 442.6 373.6 Q440.6 373.6 440.6 371.9 Q440.6 370.9 442.6 368.6 Z" fill="#b01010" stroke="#3a1010" stroke-width="0.5"/><circle cx="442.6" cy="371.9" r="0.8" fill="#f59a20"/>
<g fill="none" stroke="#2a2a2a" stroke-width="1.15" stroke-linecap="round" stroke-linejoin="round"><path d="M464.4 372.9 L469.5 361.6 L474.6 372.9 M466.2 369.2 H472.8"/></g>
<path d="M400.2 399.6 L407.85 392.3 L412.9 397.1 L405.3 404.4 Z" fill="#fff" stroke="#2a2a2a" stroke-width="1.1" stroke-linejoin="round"/>
<path d="M407.85 392.9 L412.3 397.1 L407.6 401.6 L403.1 397.4 Z" fill="#f7aac8" stroke="#2a2a2a" stroke-width="0.8" stroke-linejoin="round"/>
<path d="M404.6 404.5 H410.2" stroke="#2a2a2a" stroke-width="1.1" fill="none" stroke-linecap="round"/>
<path d="M432.30 404.40 L434.49 404.05 L439.44 399.10 L437.60 397.26 L432.65 402.21 Z" fill="#fff" stroke="#2a2a2a" stroke-width="1" stroke-linejoin="round"/>
<path d="M440.86 398.96 L437.74 395.84" stroke="#0b5cc5" stroke-width="2.9" stroke-linecap="round"/>
<circle cx="442.20" cy="394.50" r="2.05" fill="#0b5cc5"/>
<g fill="none" stroke="#2a2a2a" stroke-width="1.1" stroke-linecap="round" stroke-linejoin="round"><circle cx="468.5" cy="397.6" r="3.9"/><path d="M471.3 400.4 L474.6 403.7"/></g>
<path d="M468.5 394.9 Q468.9 397.2 471.1 397.6 Q468.9 398 468.5 400.3 Q468.1 398 465.9 397.6 Q468.1 397.2 468.5 394.9 Z" fill="#1a73d9"/>
<text x="437.9" y="424.8" font-size="10" fill="#f7f8fb" text-anchor="middle" textLength="22" lengthAdjust="spacingAndGlyphs" stroke="#f9fafc" stroke-width="2.4" stroke-linejoin="round">Tools</text><text x="437.9" y="424.8" font-size="10" fill="#4a4a4a" text-anchor="middle" textLength="22" lengthAdjust="spacingAndGlyphs" stroke="#4a4a4a" stroke-width="0.22">Tools</text>
<rect x="507.4" y="364.1" width="24.1" height="37.1" rx="4" fill="#fff" stroke="#3a8ad6" stroke-width="1.5"/>
<rect x="508.9" y="365.7" width="21.2" height="21.2" rx="1.5" fill="#efeff1"/>
<rect x="508.9" y="391" width="21.2" height="8.2" rx="1.5" fill="#efeff1"/>
<line x1="508.9" y1="388.6" x2="530.1" y2="388.6" stroke="#cfcfd2" stroke-width="1.4"/>
<g fill="none" stroke="#666" stroke-width="1" stroke-linecap="round" stroke-linejoin="round"><path d="M517 394.3 L519.5 396.9 L522 394.3"/></g>
<path d="M514.4 368 L515.8 370 H523.2 L524.6 368 L524.2 375 Q523.8 380.5 519.5 385.4 Q515.2 380.5 514.8 375 Z" fill="#7d7d7d" stroke="#464646" stroke-width="0.9" stroke-linejoin="round"/>
<path d="M516 371.2 H523 V377.5 Q521 378.6 519.5 378 Q518 377.4 516 378 Z" fill="#fff"/>
<path d="M517.2 372.6 H518.6 M520 372.6 H521 M517.6 374 V375.2" stroke="#888" stroke-width="0.7"/>
<text x="519.05" y="424.8" font-size="10" fill="#f7f8fb" text-anchor="middle" textLength="32.7" lengthAdjust="spacingAndGlyphs" stroke="#f9fafc" stroke-width="2.4" stroke-linejoin="round">Brushes</text><text x="519.05" y="424.8" font-size="10" fill="#4a4a4a" text-anchor="middle" textLength="32.7" lengthAdjust="spacingAndGlyphs" stroke="#4a4a4a" stroke-width="0.22">Brushes</text>
<rect x="553.9" y="351.4" width="134" height="62.6" rx="3" fill="#fbfbfd" stroke="#ededf1" stroke-width="1"/>
<clipPath id="galclip"><rect x="554" y="351.5" width="134" height="62.2"/></clipPath>
<g clip-path="url(#galclip)"><g fill="none" stroke="#2e2e2e" stroke-width="1.15" stroke-linecap="round" stroke-linejoin="round"><path d="M561.2 359.8 L570 368.3"/><path d="M577.3 368 Q576.8 362 579.5 361.5 Q582 361.3 582.2 364.5 Q582.5 368.3 585.3 366 Q587.5 363.5 588 359.8"/><circle cx="599.8" cy="364.05" r="4.4"/><rect x="612.5" y="360" width="10" height="8.2"/><rect x="629.7" y="359.7" width="10.6" height="8.5" rx="2.2"/><path d="M647.6 368.4 L650.4 359.6 H656.6 L654.8 365.4 L657.3 365.8 V368.4 Z"/><path d="M665 368.2 L669.8 359.9 L674.6 368.2 Z"/><path d="M560 377.3 V386 H570.3 Z"/><path d="M582.6 376.2 L587.8 381.3 L582.6 386.4 L577.4 381.3 Z"/><path d="M600.3 375.9 L605.2 379.5 L603.4 385.6 H597.2 L595.4 379.5 Z"/><path d="M617.1 375.9 L621.9 378.6 V384.1 L617.1 386.8 L612.3 384.1 V378.6 Z"/><path d="M629.6 378.9 H634.6 V375.9 L640.4 381.2 L634.6 386.4 V383.5 H629.6 Z"/><path d="M657.6 378.9 H652.6 V375.9 L646.8 381.2 L652.6 386.4 V383.5 H657.6 Z"/><path d="M667.5 386.2 V381.3 H664.6 L669.8 375.8 L675 381.3 H672.1 V386.2 Z"/><path d="M563.2 393.6 V398 H560.4 L565.6 403.5 L570.8 398 H568 V393.6 Z"/><path d="M582.6 393.5 Q583.3 397.8 587.6 398.5 Q583.3 399.2 582.6 403.5 Q581.9 399.2 577.6 398.5 Q581.9 397.8 582.6 393.5 Z"/><path d="M599.8 393.5 L601.2 396.8 L604.8 397.1 L602.1 399.4 L602.9 402.9 L599.8 401.1 L596.7 402.9 L597.5 399.4 L594.8 397.1 L598.4 396.8 Z"/><path d="M617.1 392.8 L618.7 395.5 L621.8 395.5 L620.3 398.1 L621.8 400.8 L618.7 400.8 L617.1 403.5 L615.5 400.8 L612.4 400.8 L613.9 398.1 L612.4 395.5 L615.5 395.5 Z"/><path d="M631 393.7 H638.8 Q640.6 393.7 640.6 395.5 V399.3 Q640.6 401.1 638.8 401.1 H634 L630.8 403.4 L631.6 401.1 Q629.2 401.1 629.2 399.3 V395.5 Q629.2 393.7 631 393.7 Z"/><path d="M652.1 393.6 Q657.9 393.6 657.9 397.3 Q657.9 401 652.1 401 Q651 401 650 400.8 L647.9 403.3 L648.5 400.2 Q646.3 399.2 646.3 397.3 Q646.3 393.6 652.1 393.6 Z"/><path d="M669.6 393.5 Q674.7 393.5 674.7 398.2 Q674.7 402.8 669.6 402.8 Q668.4 402.8 667.4 402.3 L664.8 403.4 L665.6 401.1 Q664.5 399.9 664.5 398.2 Q664.5 393.5 669.6 393.5 Z"/><path d="M560 414 Q560 410.5 562.8 410.5 Q565 410.5 565.4 412 Q565.8 410.5 568 410.5 Q570.8 410.5 570.8 414"/><path d="M577.5 414.5 L578.5 412.5 Q581.5 409.5 582.5 411.5 L583.5 414"/></g></g>
<g fill="none" stroke="#8a8a8a" stroke-width="1.1" stroke-linecap="round" stroke-linejoin="round"><path d="M705.9 363.2 H700.9 Q699.3 363.2 699.3 364.8 V370.8 Q699.3 372.3 700.9 372.3 H702.4"/><path d="M702.6 372.2 L703.1 370 L709.8 363.6 Q710.6 362.9 711.4 363.7 Q712.1 364.5 711.3 365.3 L704.8 371.6 Z"/></g>
<g fill="none" stroke="#6a6a6a" stroke-width="1.0" stroke-linecap="round" stroke-linejoin="round"><path d="M719.6 365.4 L722.6500000000001 368.7 L725.7 365.4"/></g>
<g fill="none" stroke="#8a8a8a" stroke-width="1.1" stroke-linecap="round" stroke-linejoin="round"><path d="M700.5 398.5 L703.5 395 L707.2 398.5 L704 401.6 Z M703.3 393.6 V395.2 M706 395.9 H708.6 Q710.5 395.9 710.5 397.8 V402.6 Q710.5 404.2 708.6 404.2 H701.2 Q699.4 404.2 699.4 402.6 V400.8"/><circle cx="707.2" cy="401" r="1"/></g>
<g fill="none" stroke="#6a6a6a" stroke-width="1.0" stroke-linecap="round" stroke-linejoin="round"><path d="M719.6 397.1 L722.6500000000001 400.4 L725.7 397.1"/></g>
<g fill="none" stroke="#8a8a8a" stroke-width="1.2" stroke-linecap="round" stroke-linejoin="round"><path d="M745 371.3 H756.2 Q758.6 371.3 758.6 373.7 V382.8 Q758.6 385.2 756.2 385.2 H743.1 Q740.6 385.2 740.6 382.8 V382"/></g>
<g fill="none" stroke="#c8c8c8" stroke-width="1.1" stroke-linecap="round" stroke-linejoin="round"><path d="M741 373 L753.5 375.6 M741 375.3 L753.5 377.4 M741 377.6 L753.5 379.6 M741 380.4 L753.5 382"/></g>
<g fill="none" stroke="#bbb" stroke-width="1" stroke-linecap="round" stroke-linejoin="round"><path d="M747.1 395.9 L749.6 398.6 L752.1 395.9"/></g>
<text x="660.5" y="424.8" font-size="10" fill="#f7f8fb" text-anchor="middle" textLength="30.2" lengthAdjust="spacingAndGlyphs" stroke="#f9fafc" stroke-width="2.4" stroke-linejoin="round">Shapes</text><text x="660.5" y="424.8" font-size="10" fill="#4a4a4a" text-anchor="middle" textLength="30.2" lengthAdjust="spacingAndGlyphs" stroke="#4a4a4a" stroke-width="0.22">Shapes</text>
<circle cx="797.1" cy="367.8" r="11.9" fill="#fff" stroke="#3a8ad6" stroke-width="1.5"/>
<circle cx="797.1" cy="367.8" r="9.3" fill="#000"/>
<circle cx="797.1" cy="397.9" r="9.4" fill="#fff" stroke="#a8a8a8" stroke-width="1.3"/>
<circle cx="825.50" cy="363.7" r="6.1" fill="#000000" stroke="rgba(0,0,0,.18)" stroke-width="0.8"/>
<circle cx="825.50" cy="382.8" r="6.1" fill="#ffffff" stroke="#a8a8a8" stroke-width="1.1"/>
<circle cx="825.50" cy="401.8" r="6.1" fill="#fbfbfd" stroke="#ababab" stroke-width="1.1"/>
<circle cx="844.49" cy="363.7" r="6.1" fill="#7f7f7f" stroke="rgba(0,0,0,.18)" stroke-width="0.8"/>
<circle cx="844.49" cy="382.8" r="6.1" fill="#c3c3c3" stroke="rgba(0,0,0,.2)" stroke-width="0.8"/>
<circle cx="844.49" cy="401.8" r="6.1" fill="#fbfbfd" stroke="#ababab" stroke-width="1.1"/>
<circle cx="863.48" cy="363.7" r="6.1" fill="#880015" stroke="rgba(0,0,0,.18)" stroke-width="0.8"/>
<circle cx="863.48" cy="382.8" r="6.1" fill="#b97a57" stroke="rgba(0,0,0,.2)" stroke-width="0.8"/>
<circle cx="863.48" cy="401.8" r="6.1" fill="#fbfbfd" stroke="#ababab" stroke-width="1.1"/>
<circle cx="882.47" cy="363.7" r="6.1" fill="#ed1c24" stroke="rgba(0,0,0,.18)" stroke-width="0.8"/>
<circle cx="882.47" cy="382.8" r="6.1" fill="#ffaec9" stroke="rgba(0,0,0,.2)" stroke-width="0.8"/>
<circle cx="882.47" cy="401.8" r="6.1" fill="#fbfbfd" stroke="#ababab" stroke-width="1.1"/>
<circle cx="901.46" cy="363.7" r="6.1" fill="#ff7f27" stroke="rgba(0,0,0,.18)" stroke-width="0.8"/>
<circle cx="901.46" cy="382.8" r="6.1" fill="#ffc90e" stroke="rgba(0,0,0,.2)" stroke-width="0.8"/>
<circle cx="901.46" cy="401.8" r="6.1" fill="#fbfbfd" stroke="#ababab" stroke-width="1.1"/>
<circle cx="920.45" cy="363.7" r="6.1" fill="#fff200" stroke="rgba(0,0,0,.18)" stroke-width="0.8"/>
<circle cx="920.45" cy="382.8" r="6.1" fill="#efe4b0" stroke="rgba(0,0,0,.2)" stroke-width="0.8"/>
<circle cx="920.45" cy="401.8" r="6.1" fill="#fbfbfd" stroke="#ababab" stroke-width="1.1"/>
<circle cx="939.44" cy="363.7" r="6.1" fill="#22b14c" stroke="rgba(0,0,0,.18)" stroke-width="0.8"/>
<circle cx="939.44" cy="382.8" r="6.1" fill="#b5e61d" stroke="rgba(0,0,0,.2)" stroke-width="0.8"/>
<circle cx="939.44" cy="401.8" r="6.1" fill="#fbfbfd" stroke="#ababab" stroke-width="1.1"/>
<circle cx="958.43" cy="363.7" r="6.1" fill="#00a2e8" stroke="rgba(0,0,0,.18)" stroke-width="0.8"/>
<circle cx="958.43" cy="382.8" r="6.1" fill="#99d9ea" stroke="rgba(0,0,0,.2)" stroke-width="0.8"/>
<circle cx="958.43" cy="401.8" r="6.1" fill="#fbfbfd" stroke="#ababab" stroke-width="1.1"/>
<circle cx="977.42" cy="363.7" r="6.1" fill="#3f48cc" stroke="rgba(0,0,0,.18)" stroke-width="0.8"/>
<circle cx="977.42" cy="382.8" r="6.1" fill="#7092be" stroke="rgba(0,0,0,.2)" stroke-width="0.8"/>
<circle cx="977.42" cy="401.8" r="6.1" fill="#fbfbfd" stroke="#ababab" stroke-width="1.1"/>
<circle cx="996.41" cy="363.7" r="6.1" fill="#a349a4" stroke="rgba(0,0,0,.18)" stroke-width="0.8"/>
<circle cx="996.41" cy="382.8" r="6.1" fill="#c8bfe7" stroke="rgba(0,0,0,.2)" stroke-width="0.8"/>
<circle cx="996.41" cy="401.8" r="6.1" fill="#fbfbfd" stroke="#ababab" stroke-width="1.1"/>
<defs><radialGradient id="wheelw" cx="50%" cy="50%" r="50%"><stop offset="0" stop-color="#fff" stop-opacity="0.95"/><stop offset=".7" stop-color="#fff" stop-opacity="0"/></radialGradient><clipPath id="wclip"><circle cx="1027" cy="383.4" r="9.4"/></clipPath></defs>
<g clip-path="url(#wclip)"><path d="M1027 383.4 L1015.41 386.51 L1015.46 380.09 Z" fill="#ff0000"/><path d="M1027 383.4 L1015.41 380.29 L1018.66 374.77 Z" fill="#ff8000"/><path d="M1027 383.4 L1018.51 374.91 L1024.10 371.76 Z" fill="#ffff00"/><path d="M1027 383.4 L1023.89 371.81 L1030.31 371.86 Z" fill="#80ff00"/><path d="M1027 383.4 L1030.11 371.81 L1035.63 375.06 Z" fill="#00ff00"/><path d="M1027 383.4 L1035.49 374.91 L1038.64 380.50 Z" fill="#00ff80"/><path d="M1027 383.4 L1038.59 380.29 L1038.54 386.71 Z" fill="#00ffff"/><path d="M1027 383.4 L1038.59 386.51 L1035.34 392.03 Z" fill="#0080ff"/><path d="M1027 383.4 L1035.49 391.89 L1029.90 395.04 Z" fill="#0000ff"/><path d="M1027 383.4 L1030.11 394.99 L1023.69 394.94 Z" fill="#8000ff"/><path d="M1027 383.4 L1023.89 394.99 L1018.37 391.74 Z" fill="#ff00ff"/><path d="M1027 383.4 L1018.51 391.89 L1015.36 386.30 Z" fill="#ff0080"/><circle cx="1027" cy="383.4" r="9.4" fill="url(#wheelw)"/></g>
<circle cx="1034.4" cy="376.3" r="4.3" fill="#fff" stroke="#666" stroke-width="1.1"/>
<g fill="none" stroke="#9a9a9a" stroke-width="0.9" stroke-linecap="round" stroke-linejoin="round"><path d="M1034.4 374 V378.6 M1032.1 376.3 H1036.7"/></g>
<text x="914.4" y="424.8" font-size="10" fill="#f7f8fb" text-anchor="middle" textLength="27.3" lengthAdjust="spacingAndGlyphs" stroke="#f9fafc" stroke-width="2.4" stroke-linejoin="round">Colors</text><text x="914.4" y="424.8" font-size="10" fill="#4a4a4a" text-anchor="middle" textLength="27.3" lengthAdjust="spacingAndGlyphs" stroke="#4a4a4a" stroke-width="0.22">Colors</text>
<defs><linearGradient id="cpa" x1="0" y1="0" x2="0" y2="1"><stop offset="0" stop-color="#1b8ff2"/><stop offset=".35" stop-color="#1f9bd8"/><stop offset=".6" stop-color="#32a86a"/><stop offset=".85" stop-color="#a6b820"/><stop offset="1" stop-color="#f4c000"/></linearGradient><linearGradient id="cpb" x1="0" y1="0" x2="0" y2="1"><stop offset="0" stop-color="#a552e6"/><stop offset=".5" stop-color="#ee4e94"/><stop offset="1" stop-color="#fa8a4c"/></linearGradient></defs>
<path d="M1075.6 369.3 H1082.2 Q1084.6 369.3 1085.4 372.2 L1085.8 373.9 H1083 Q1081 373.9 1080.2 376 L1078.2 381.2 Q1077.8 382.1 1076.8 382.1 H1072.2 Q1069.6 382.1 1070.1 379.4 L1071.6 372.6 Q1072.4 369.3 1075.6 369.3 Z" fill="url(#cpa)"/>
<path d="M1081.5 370 Q1084.3 369.6 1085.4 372.2 L1085.8 373.9 H1083 Q1081.6 373.9 1080.9 374.6 Z" fill="#1d4fc4" opacity=".85"/>
<path d="M1086.6 386.7 H1077.7 Q1075.3 386.7 1074.5 383.8 L1074.1 382.1 H1076.9 Q1078.9 382.1 1079.7 380 L1081.7 374.8 Q1082.1 373.9 1083.1 373.9 H1087.6 Q1090.2 373.9 1089.7 376.6 L1088.2 383.4 Q1087.5 386.7 1086.6 386.7 Z" fill="url(#cpb)"/>
<path d="M1074.1 382.1 H1076.9 Q1078.2 382.1 1078.9 381.3 L1077.6 386.5 Q1075.1 386.6 1074.5 383.8 Z" fill="#ee3a22"/>
<g fill="none" stroke="#666" stroke-width="1" stroke-linecap="round" stroke-linejoin="round"><path d="M1077.1 392.7 L1079.5 395.5 L1081.9 392.7"/></g>
<text x="1079.3" y="424.8" font-size="10" fill="#f7f8fb" text-anchor="middle" textLength="30.8" lengthAdjust="spacingAndGlyphs" stroke="#f9fafc" stroke-width="2.4" stroke-linejoin="round">Copilot</text><text x="1079.3" y="424.8" font-size="10" fill="#4a4a4a" text-anchor="middle" textLength="30.8" lengthAdjust="spacingAndGlyphs" stroke="#4a4a4a" stroke-width="0.22">Copilot</text>
<g fill="none" stroke="#2e2e2e" stroke-width="1.2" stroke-linecap="round" stroke-linejoin="round"><path d="M1131 375.4 L1138.6 379.8 L1131 384.2 L1123.4 379.8 Z"/><path d="M1123.6 386.9 L1131 391.1 L1138.4 386.9"/></g>
<g fill="none" stroke="#2b7cd3" stroke-width="1.2" stroke-linecap="round" stroke-linejoin="round"><path d="M1123.6 383.4 L1131 387.6 L1138.4 383.4"/></g>
<text x="1130.9" y="424.8" font-size="10" fill="#f7f8fb" text-anchor="middle" textLength="26.5" lengthAdjust="spacingAndGlyphs" stroke="#f9fafc" stroke-width="2.4" stroke-linejoin="round">Layers</text><text x="1130.9" y="424.8" font-size="10" fill="#4a4a4a" text-anchor="middle" textLength="26.5" lengthAdjust="spacingAndGlyphs" stroke="#4a4a4a" stroke-width="0.22">Layers</text>
<line x1="228.8" y1="319.5" x2="228.8" y2="365.5" stroke="#3d9bf4" stroke-width="1.5"/>
<line x1="438.3" y1="319.5" x2="438.3" y2="358.5" stroke="#3d9bf4" stroke-width="1.5"/>
<line x1="656.3" y1="319.5" x2="656.3" y2="349.5" stroke="#3d9bf4" stroke-width="1.5"/>
<line x1="1079.8" y1="319.5" x2="1079.8" y2="353.5" stroke="#3d9bf4" stroke-width="1.5"/>
<line x1="323.0" y1="429.3" x2="323.0" y2="468.5" stroke="#3d9bf4" stroke-width="1.5"/>
<line x1="519.8" y1="427.7" x2="519.8" y2="468.5" stroke="#3d9bf4" stroke-width="1.5"/>
<line x1="912.0" y1="427.4" x2="912.0" y2="468.5" stroke="#3d9bf4" stroke-width="1.5"/>
<line x1="1132.0" y1="429.2" x2="1132.0" y2="468.5" stroke="#3d9bf4" stroke-width="1.5"/>
<text x="228.4" y="291.6" font-size="11" fill="#1a1a1a" stroke="#1a1a1a" stroke-width="0.22" text-anchor="middle" textLength="42.0" lengthAdjust="spacingAndGlyphs">Selection</text>
<text x="437.8" y="291.6" font-size="11" fill="#1a1a1a" stroke="#1a1a1a" stroke-width="0.22" text-anchor="middle" textLength="23.6" lengthAdjust="spacingAndGlyphs">Tools</text>
<text x="656.2" y="291.6" font-size="11" fill="#1a1a1a" stroke="#1a1a1a" stroke-width="0.22" text-anchor="middle" textLength="34.7" lengthAdjust="spacingAndGlyphs">Shapes</text>
<text x="1079.2" y="291.6" font-size="11" fill="#1a1a1a" stroke="#1a1a1a" stroke-width="0.22" text-anchor="middle" textLength="31.1" lengthAdjust="spacingAndGlyphs">Copilot</text>
<text x="322.9" y="504.7" font-size="11" fill="#1a1a1a" stroke="#1a1a1a" stroke-width="0.22" text-anchor="middle" textLength="26.8" lengthAdjust="spacingAndGlyphs">Image</text>
<text x="519.3" y="504.7" font-size="11" fill="#1a1a1a" stroke="#1a1a1a" stroke-width="0.22" text-anchor="middle" textLength="36.9" lengthAdjust="spacingAndGlyphs">Brushes</text>
<text x="912.1" y="504.7" font-size="11" fill="#1a1a1a" stroke="#1a1a1a" stroke-width="0.22" text-anchor="middle" textLength="28.8" lengthAdjust="spacingAndGlyphs">Colors</text>
<text x="1131.8" y="504.7" font-size="11" fill="#1a1a1a" stroke="#1a1a1a" stroke-width="0.22" text-anchor="middle" textLength="30.5" lengthAdjust="spacingAndGlyphs">Layers</text>
</svg>
<div class="badge" style="left:217.5px;top:297.5px"><svg width="22.4" height="22.4" viewBox="0 0 22.4 22.4" style="position:absolute;left:0;top:0"><path d="M11.9 7.4 H13.5 V15.1 H11.9 V9.9 Q10.9 10.7 9.5 11.1 V9.6 Q11.2 8.9 11.9 7.4 Z" fill="#fff"/></svg></div>
<div class="badge" style="left:427.0px;top:297.4px">3</div>
<div class="badge" style="left:645.3px;top:297.4px">5</div>
<div class="badge" style="left:1068.2px;top:297.5px">7</div>
<div class="badge" style="left:311.6px;top:468.1px">2</div>
<div class="badge" style="left:508.4px;top:468.1px">4</div>
<div class="badge" style="left:900.8px;top:468.3px">6</div>
<div class="badge" style="left:1120.7px;top:468.3px">8</div>
</body></html>
